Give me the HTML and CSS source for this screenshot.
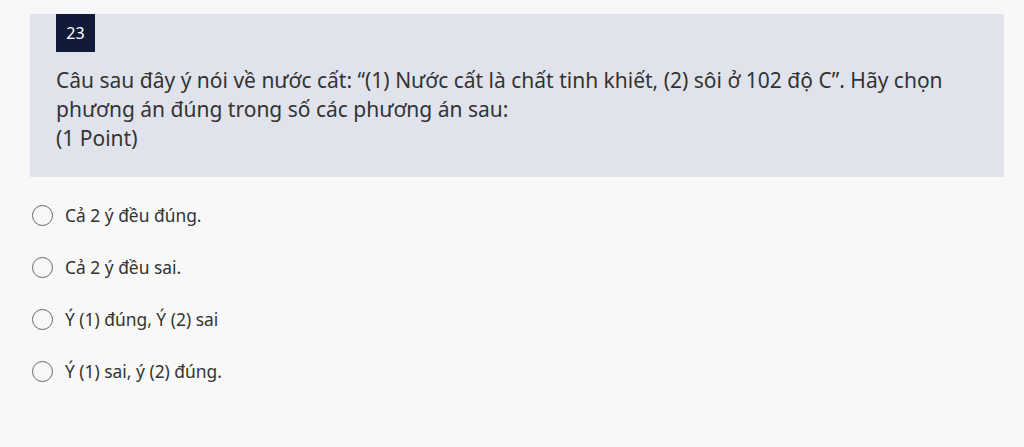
FILE: index.html
```html
<!DOCTYPE html>
<html lang="vi">
<head>
<meta charset="utf-8">
<link rel="stylesheet" href="styles.css">
</head>
<body>
<div class="page">
  <div class="question">
    <div class="badge">23</div>
    <div class="title">Câu sau đây ý nói về nước cất: “(1) Nước cất là chất tinh khiết, (2) sôi ở 102 độ C”. Hãy chọn phương án đúng trong số các phương án sau:<br>(1 Point)</div>
  </div>
  <div class="options">
    <label class="option"><span class="radio"></span><span class="label">Cả 2 ý đều đúng.</span></label>
    <label class="option"><span class="radio"></span><span class="label">Cả 2 ý đều sai.</span></label>
    <label class="option"><span class="radio"></span><span class="label">Ý (1) đúng, Ý (2) sai</span></label>
    <label class="option"><span class="radio"></span><span class="label">Ý (1) sai, ý (2) đúng.</span></label>
  </div>
</div>
</body>
</html>
```
FILE: styles.css
```css
html, body {
  margin: 0;
  padding: 0;
  background: #f8f8f8;
  font-family: "Noto Sans", "Open Sans", sans-serif;
  color: #333;
}
.page {
  padding: 14px 20px 0 30px;
}
.question {
  background: #e1e3ec;
  padding: 0 26px 24px 26px;
}
.badge {
  display: inline-block;
  vertical-align: top;
  background: #111a36;
  color: #fff;
  font-size: 16px;
  width: 39px;
  height: 38px;
  line-height: 38px;
  text-align: center;
}
.title {
  margin-top: 14px;
  font-size: 21px;
  line-height: 29px;
  color: #333;
}
.options {
  display: flex;
  flex-direction: column;
  padding: 27px 0 0 2px;
  gap: 30px;
}
.option {
  display: flex;
  align-items: center;
  gap: 12px;
  height: 22px;
}
.radio {
  width: 19px;
  height: 19px;
  border: 1.5px solid #666;
  border-radius: 50%;
  flex: none;
}
.label {
  font-size: 17.4px;
  color: #333;
}
```
